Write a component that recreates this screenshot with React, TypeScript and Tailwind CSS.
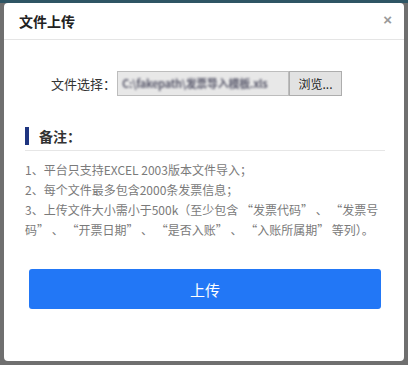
import React from "react";

export default function App() {
  const font = { fontFamily: '"Noto Sans CJK SC", "Noto Sans", "Liberation Sans", sans-serif' };
  return (
    <div className="w-[408px] h-[365px] bg-[#6f6f6f] relative overflow-hidden" style={font}>
      <div className="h-[3px] bg-[#2e5564]" />
      <div className="ml-[4px] w-[400px] h-[358px] bg-white rounded-[4px] flex flex-col">
        {/* header */}
        <div className="h-[37px] border-b border-[#e5e5e5] flex items-center justify-between pl-[15px] pr-[12px]">
          <span className="text-[14px] font-bold text-[#222] leading-none">文件上传</span>
          <span className="text-[15px] font-bold text-[#9a9a9a] leading-none pb-[3px]" style={{ fontFamily: '"Liberation Sans", sans-serif' }}>×</span>
        </div>
        {/* file row */}
        <div className="flex items-center mt-[31px] h-[25px]">
          <div className="w-[113px] text-right text-[13px] text-[#333] leading-none pr-[1px]">文件选择：</div>
          <div className="w-[172px] h-[25px] bg-[#e8e8e8] border border-[#bdbdbd] flex items-center pl-[4px] overflow-hidden">
            <span className="text-[11px] font-bold text-[#5c5c6e] whitespace-nowrap [filter:blur(1px)] tracking-[-0.3px]">C:\fakepath\发票导入模板.xls</span>
          </div>
          <button className="w-[53px] h-[25px] bg-[#e2e2e2] border border-[#adadad] text-[12px] text-[#222] leading-none">浏览...</button>
        </div>
        {/* notes */}
        <div className="mx-[21px] mt-[31px]">
          <div className="flex items-center h-[18px]">
            <div className="w-[4px] h-[18px] bg-[#1f3580]" />
            <span className="ml-[10px] text-[14px] font-bold text-[#333] leading-none">备注：</span>
          </div>
          <div className="mt-[5px] border-b border-[#e6e6e6] w-[360px]" />
          <div className="mt-[9px] text-[12px] leading-[20px] text-[#7a7a7a]">
            <div>1、平台只支持EXCEL 2003版本文件导入；</div>
            <div>2、每个文件最多包含2000条发票信息；</div>
            <div>3、上传文件大小需小于500k（至少包含 “发票代码” 、 “发票号</div>
            <div>码” 、 “开票日期” 、 “是否入账” 、 “入账所属期” 等列）。</div>
          </div>
        </div>
        {/* upload button */}
        <div className="mx-[25px] mt-[29px]">
          <button className="w-[352px] h-[40px] bg-[#2277f6] rounded-[3px] text-white text-[15px] leading-none">上传</button>
        </div>
      </div>
    </div>
  );
}
